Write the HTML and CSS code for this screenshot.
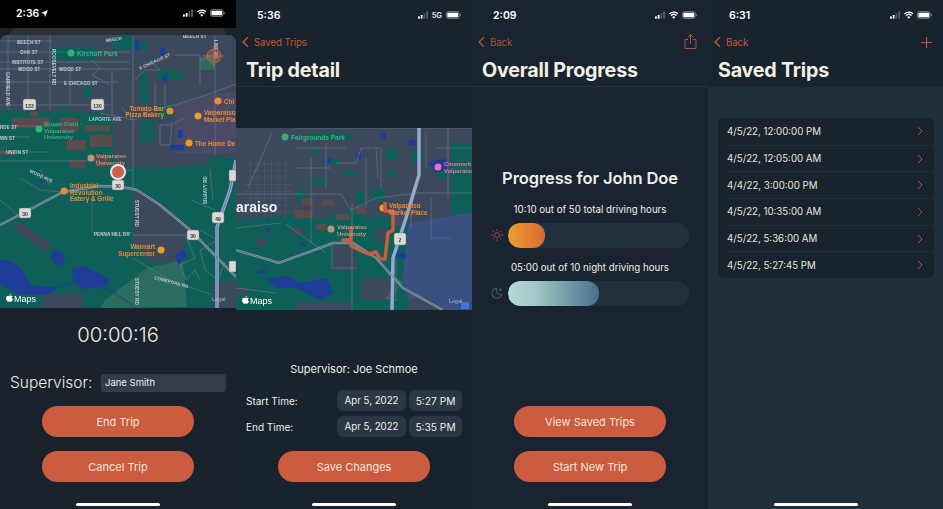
FILE: index.html
```html
<!DOCTYPE html>
<html lang="en">
<head>
<meta charset="utf-8">
<title>Driving Log</title>
<link rel="stylesheet" href="styles.css">
</head>
<body>
<svg class="defs" width="0" height="0" aria-hidden="true">
  <defs>
    <symbol id="signal" viewBox="0 0 11 8"><rect x="0" y="5.5" width="2" height="2.5" rx=".5" fill="#fff"/><rect x="3" y="4" width="2" height="4" rx=".5" fill="#fff"/><rect x="6" y="2" width="2" height="6" rx=".5" fill="#555c64"/><rect x="9" y="0" width="2" height="8" rx=".5" fill="#555c64"/></symbol>
    <symbol id="wifi" viewBox="0 0 10 8"><path d="M5 8 3.4 6.1a2.4 2.4 0 0 1 3.2 0zM2.5 5.1 1.5 4a5.2 5.2 0 0 1 7 0l-1 1.1a3.8 3.8 0 0 0-5 0zM.8 3.2 0 2.3a7.4 7.4 0 0 1 10 0l-.8.9a6.2 6.2 0 0 0-8.4 0z" fill="#fff"/></symbol>
    <symbol id="battery" viewBox="0 0 16 8"><rect x=".5" y=".5" width="13.5" height="7" rx="2" fill="none" stroke="#8a8f94"/><rect x="1.5" y="1.5" width="11.5" height="5" rx="1" fill="#fff"/><path d="M15 2.8c.6.2 1 .7 1 1.2s-.4 1-1 1.2z" fill="#8a8f94"/></symbol>
    <symbol id="back" viewBox="0 0 8 13"><path d="M6.8 1 1.2 6.5l5.6 5.5" fill="none" stroke="currentColor" stroke-width="1.6"/></symbol>
    <symbol id="apple" viewBox="0 0 10 12"><path d="M7.1 0c.1 1-.8 2.4-2.2 2.4C4.8 1.200 5.900.1 7.100 0zM5 3c.6 0 1.300-.6 2.400-.6.8 0 1.700.4 2.200 1.200-1.700 1-1.500 3.400.4 4.200-.6 1.600-1.700 3.200-2.700 3.200-.8 0-1-.5-2-.5s-1.300.5-2 .5C1.900 11 0 8.500 0 6.100 0 3.800 1.500 2.500 2.900 2.500 3.800 2.500 4.500 3 5 3z" fill="#fff"/></symbol>
    <pattern id="grid" width="7" height="7" patternUnits="userSpaceOnUse"><path d="M0 0H7M0 0V7" stroke="#5d6a80" stroke-width=".5" fill="none"/></pattern>
  </defs>
</svg>

<main class="screens">

  <section class="phone phone-map">
    <header class="status status-black">
      <span class="time">2:36<svg class="loc" viewBox="0 0 8 8"><path d="M8 0 4.600 8 3.600 4.400 0 3.400z" fill="#fff"/></svg></span>
      <span class="status-icons"><svg class="ic-signal"><use href="#signal"/></svg><svg class="ic-wifi"><use href="#wifi"/></svg><svg class="ic-battery"><use href="#battery"/></svg></span>
    </header>
    <div class="peek"></div>
    <svg class="map map-large" viewBox="0 35 236 273" role="img" aria-label="Map of Valparaiso">
      <rect class="f-green" x="0" y="35" width="236" height="273"/>
      <path class="f-slate" d="M0 35H236V160L215 155 205 165 172 168 113 167 113 122 100 113 0 110z"/>
      <path class="f-purple" d="M175 105 205 95 236 92V153H215L200 153H175z"/>
      <path class="f-green" d="M52 47h45v13H52zM113 37h20v13h-20zM157 70h25v10h-25zM140 73h8v30h-8zM83 87h9v10h-9zM158 105h16v12h-16zM122 35h12v6h-12zM132 42h16v8h-16zM140 120h14v22h-14zM60 105h6v5h-6z"/>
      <path class="f-lawn" d="M200 57h15v13h-15z"/>
      <path class="f-brown" d="M12 118h38v10H12zM60 118h18v14H60zM85 125h25v6H85zM90 135h22v12H90zM66 140h20v10H66zM95 155h15v12H95zM0 150h14v5H0zM70 160h16v8H70zM30 112h8v5h-8z"/>
      <path class="f-slate" d="M133 190 165 205 190 232 178 263 150 262 140 245 133 245zM13 228 20 222 52 245 45 252zM40 308 45 294 83 292 83 308zM213 282 236 280V308H213z"/>
      <path class="f-lawn" d="M147 268 183 260 187 307 100 308 105 300z"/>
      <path class="f-water" d="M0 260c15 0 25 10 30 25 8 2 15 1 26 2l-8 8-30 0-18-12zM72 270l12-4 18 9 8 5-5 6-22 3-10-8zM53 250l10 3 2 11-8 1-6-6zM175 256l8-7 4 6-8 10zM135 40h4v10h-4zM160 48h5v8h-5zM162 75h5v6h-5zM178 130h5v8h-5zM170 145h14v5h-14zM40 180h4v4h-4z"/>
      <path class="r-water" d="M48 290 75 283 110 290 132 305"/>
      <path class="r-thin" d="M0 41H52M0 52H130M0 62H130M0 69H130M0 82H118M0 105H110M0 126H60M0 137H30M0 152H50M0 161H100M8 35V110M28 35V105M50 35V110M70 70V105M92 60 100 68 92 75 110 85M112 70V120M133 35V190M150 60 160 70 145 70 135 80M155 82V115M175 55H200V85M200 60 215 55M165 85V110M185 118 170 125 160 125 160 145 170 145 172 125M215 35V155M215 92 236 84M100 113 135 120 150 110 175 105 215 92M133 120 122 108M20 178 40 190 62 192M92 198V233H133M133 235H190M133 258 170 280 212 295M191 200 215 210M200 230 218 240 200 250 205 270 218 280 225 262M185 235 195 258 180 265 186 280 195 270 200 280M210 170 213 200M120 170H133M0 200 18 215M40 170 50 185"/>
      <path class="r-high" d="M0 225 25 212 63 192 100 186Q122 186 137 190L160 205 190 230 236 277"/>
      <path class="r-major" d="M217 308V227L230 190 236 160"/>
      <path class="r-dark" d="M0 225 25 212 63 192 100 186Q122 186 137 190L160 205 190 230 236 277M217 308V227L230 190 236 160"/>
      <g class="t-road">
        <text x="17" y="43.500">BEECH ST</text><text x="20" y="54">OAK ST</text><text x="12" y="64">INSTITUTE ST</text><text x="18" y="71">WOOD ST</text><text x="59" y="71">WOOD ST</text><text x="64" y="84.500">E CHICAGO ST</text><text x="140" y="70" transform="rotate(-25 140 70)">E CHICAGO ST</text><text x="106" y="42" transform="rotate(-8 106 42)">BEECH</text><text x="183" y="38">BEECH ST</text><text x="89" y="121">LAPORTE AVE</text><text x="94" y="236">PENNA HILL DR</text><text x="154" y="279" transform="rotate(15 154 279)">COMEFOAD RD</text><text x="0" y="129">RDE ST</text><text x="0" y="140">WN ST</text><text x="6" y="154">UNION ST</text><text x="29" y="172" transform="rotate(25 29 172)">WOOD AVE</text>
      </g>
      <g class="t-road">
        <text x="6" y="72" transform="rotate(90 6 72)">GARFIELD AVE</text><text x="52" y="49" transform="rotate(90 52 49)">ROOSEVELT RD</text><text x="135" y="200" transform="rotate(90 135 200)">STUDSY RD</text><text x="135" y="278" transform="rotate(90 135 278)">STUDSY RD</text><text x="214" y="40" transform="rotate(90 214 40)">LINE RD</text><text x="207" y="204" transform="rotate(-90 207 204)">SILHAVY RD</text>
      </g>
      <g class="shield"><rect x="23" y="99" width="13" height="11" rx="2"/><rect x="91" y="99" width="13" height="11" rx="2"/><rect x="112" y="180" width="12" height="10" rx="2"/><rect x="19" y="208" width="12" height="10" rx="2"/><rect x="187" y="230" width="12" height="10" rx="2"/><rect x="212" y="212" width="12" height="11" rx="2"/><rect x="229" y="261" width="7" height="11" rx="1"/><rect x="229" y="170" width="7" height="11" rx="1"/></g>
      <g class="t-shield"><text x="29.500" y="108">133</text><text x="97.500" y="108">130</text><text x="118" y="188">30</text><text x="25" y="216">30</text><text x="193" y="238">30</text><text x="218" y="221">49</text></g>
      <circle class="pin-green" cx="71" cy="53" r="3.500"/><circle class="pin-green" cx="39" cy="129" r="3.500"/><circle class="pin-brown" cx="91" cy="158" r="3.500"/>
      <circle class="pin-orange" cx="170" cy="111" r="3.500"/><circle class="pin-orange" cx="218" cy="101" r="3.500"/><circle class="pin-yellow" cx="198" cy="116" r="3.500"/><circle class="pin-yellow" cx="189" cy="143" r="3.500"/><circle class="pin-orange" cx="64" cy="191" r="3.500"/><circle class="pin-yellow" cx="161" cy="250" r="3.500"/>
      <text class="t-green t-park" x="77" y="56">Kirchoff Park</text>
      <g class="t-green"><text x="44" y="126">Brown Field -</text><text x="44" y="132.500">Valparaiso</text><text x="44" y="139">University</text></g>
      <g class="t-brown"><text x="96" y="158">Valparaiso</text><text x="96" y="165">University</text></g>
      <g class="t-orange t-end"><text x="164" y="111">Tomato Bar</text><text x="164" y="117">Pizza Bakery</text><text x="155" y="249">Walmart</text><text x="155" y="256">Supercenter</text></g>
      <g class="t-orange"><text x="224" y="104">Chi</text><text x="204" y="115">Valparaiso</text><text x="204" y="122">Market Pla</text><text x="195" y="146">The Home De</text><text x="70" y="188">Industrial</text><text x="70" y="194.500">Revolution</text><text x="70" y="201">Eatery &amp; Grille</text></g>
      <circle class="user-halo" cx="118" cy="172" r="8"/><circle class="user-dot" cx="118" cy="172" r="6"/>
      <g class="target"><circle cx="214" cy="56" r="7"/><path d="M203 56h22M214 45v22"/></g>
      <use href="#apple" x="6" y="294" width="7" height="8.500"/>
      <text class="t-maps" x="14" y="302">Maps</text>
      <text class="t-legal" x="212" y="301">Legal</text>
    </svg>
    <div class="map-panel">
      <div class="timer">00:00:16</div>
      <div class="supervisor-row">
        <label class="supervisor-label" for="sup">Supervisor:</label>
        <input class="supervisor-input" id="sup" value="Jane Smith">
      </div>
    </div>
    <div class="actions">
      <button class="btn">End Trip</button>
      <button class="btn">Cancel Trip</button>
    </div>
    <div class="home"></div>
  </section>

  <section class="phone phone-detail">
    <header class="status">
      <span class="time">5:36</span>
      <span class="status-icons"><svg class="ic-signal"><use href="#signal"/></svg><span class="fiveg">5G</span><svg class="ic-battery"><use href="#battery"/></svg></span>
    </header>
    <nav class="nav"><a class="back"><svg class="ic-back"><use href="#back"/></svg>Saved Trips</a></nav>
    <h1 class="title title-ruled">Trip detail</h1>
    <svg class="map map-small" viewBox="0 0 236 182" role="img" aria-label="Map of trip route">
      <rect class="f-slate" width="236" height="182"/>
      <path class="f-green" d="M0 92 50 88 58 84 85 92 100 85 120 82 130 90 172 88 172 182H0z"/>
      <path class="f-green" d="M150 20h12v12h-12zM215 15h21v75h-21zM176 22l10-2 0 12-10 4zM70 5h45v7H70zM120 62h8v14h-8zM75 50h14v7H75zM135 60h14v12h-14zM200 40h14v10h-14zM94 30h10v6H94zM108 42h12v6h-12zM75 22h9v5h-9zM150 44h10v5h-10zM60 62h10v12H60z"/>
      <rect fill="url(#grid)" x="8" y="30" width="48" height="60"/>
      <path class="f-brown" d="M58 82h20v8H58zM66 70h12v8H66zM86 72h12v6H86zM80 96h10v6H80zM100 86h14v6h-14zM120 78h10v8h-10z"/>
      <path class="f-slate" d="M97 118 117 118 122 142 97 142z"/>
      <path class="f-slate" d="M125 150h30v22h-30zM60 174h55v8H60zM0 160h12v8H0zM140 100h12v14h-12zM20 110h10v8H20zM55 100h12v7H55z"/>
      <path class="f-lake" d="M172 96 236 84V182H210L190 168 172 172 167 150z"/>
      <path class="f-water" d="M30 151 50 148 65 155 90 150 97 165 84 172 60 160 40 160zM192 35 208 30 214 40 200 45zM145 5h5v6h-5zM90 30h5v5h-5zM120 25h5v6h-5zM160 125h10v5h-10zM172 12h7v6h-7zM30 100h4v4h-4zM65 115h5v4h-5zM22 142h8v3h-8z"/>
      <path class="f-purple" d="M155 80h12v18h-12z"/>
      <path class="r-thin" d="M0 66H105L115 82 140 70 183 65H236M36 5 12 60M75 30V115M116 75V182M130 30V80M175 70V100M195 70V110H215M100 35 120 35 125 20 145 20 145 60M0 100 45 95M50 96 90 125M96 117V140H120M150 145 167 155 150 170 162 172M190 5V40M212 0V70M160 130V170M0 160 40 165M200 20H236M58 0H236M140 20 142 50M60 20H110M60 40H95M90 15V60"/>
      <path class="r-high" d="M0 122 43 135 97 115H117L140 130 167 160 207 182"/>
      <path class="r-major" d="M183 0V47L170 90 157 130 156 182"/>
      <path class="r-dark" d="M0 122 43 135 97 115H117L140 130 167 160 207 182"/>
      <circle class="pin-brown" cx="95" cy="101" r="3.500"/><circle class="pin-yellow" cx="147" cy="80" r="3.500"/><circle class="pin-green" cx="49" cy="9" r="3.500"/><circle class="pin-pink" cx="202" cy="39" r="3.500"/>
      <path class="route" d="M149 74V83H157V102L152 105 149 131H144L140 124 133 126 128 124 115 118V112H107H115V99"/>
      <rect class="shield-small" x="158" y="105" width="12" height="12" rx="2"/>
      <text class="t-shield t-shield-dark" x="164" y="114">2</text>
      <text class="t-green t-park" x="55" y="12">Fairgrounds Park</text>
      <text class="t-city" x="0" y="84">araiso</text>
      <g class="t-brown"><text x="101" y="101">Valparaiso</text><text x="101" y="108">University</text></g>
      <g class="t-orange"><text x="153" y="80">Valparaiso</text><text x="153" y="87">Market Place</text></g>
      <g class="t-pink"><text x="208" y="38">Cinemark</text><text x="208" y="45">Valparaiso</text></g>
      <use href="#apple" x="6" y="168" width="7" height="8.500"/>
      <text class="t-maps" x="14" y="176">Maps</text>
      <text class="t-legal" x="213" y="175">Legal</text>
      <rect class="tile" x="225" y="174" width="8" height="7"/>
    </svg>
    <div class="detail-body">
      <p class="supervisor-line">Supervisor: Joe Schmoe</p>
      <div class="time-row">
        <span class="time-label">Start Time:</span>
        <span class="pill pill-date">Apr 5, 2022</span><span class="pill pill-time">5:27 PM</span>
      </div>
      <div class="time-row">
        <span class="time-label">End Time:</span>
        <span class="pill pill-date">Apr 5, 2022</span><span class="pill pill-time">5:35 PM</span>
      </div>
    </div>
    <div class="actions">
      <button class="btn">Save Changes</button>
    </div>
    <div class="home"></div>
  </section>

  <section class="phone phone-progress">
    <header class="status">
      <span class="time">2:09</span>
      <span class="status-icons"><svg class="ic-signal"><use href="#signal"/></svg><svg class="ic-wifi"><use href="#wifi"/></svg><svg class="ic-battery"><use href="#battery"/></svg></span>
    </header>
    <nav class="nav nav-muted"><a class="back"><svg class="ic-back"><use href="#back"/></svg>Back</a>
      <svg class="ic-share" viewBox="0 0 13 15"><path d="M4 5.500H1v9h11v-9H9M6.500 10V.8M3.800 3.200 6.500.6l2.700 2.600" fill="none" stroke="currentColor"/></svg>
    </nav>
    <h1 class="title title-ruled">Overall Progress</h1>
    <div class="progress">
      <h2 class="progress-title">Progress for John Doe</h2>
      <p class="progress-text">10:10 out of 50 total driving hours</p>
      <div class="meter">
        <svg class="ic-sun" viewBox="0 0 12 12"><circle cx="6" cy="6" r="2.400"/><path d="M6 0v2M6 10v2M0 6h2M10 6h2M1.800 1.800l1.400 1.400M8.800 8.800l1.400 1.400M1.800 10.200l1.400-1.400M8.800 3.200l1.400-1.400"/></svg>
        <div class="track"><div class="fill fill-day"></div></div>
      </div>
      <p class="progress-text progress-text-night">05:00 out of 10 night driving hours</p>
      <div class="meter">
        <svg class="ic-moon" viewBox="0 0 11 11"><path d="M5.200 1.200A4.500 4.500 0 1 0 9.800 7 4.200 4.200 0 0 1 5.200 1.200z"/><path d="M8.500 1v3M7 2.500h3"/></svg>
        <div class="track"><div class="fill fill-night"></div></div>
      </div>
    </div>
    <div class="actions">
      <button class="btn">View Saved Trips</button>
      <button class="btn">Start New Trip</button>
    </div>
    <div class="home"></div>
  </section>

  <section class="phone phone-list">
    <header class="status">
      <span class="time">6:31</span>
      <span class="status-icons"><svg class="ic-signal"><use href="#signal"/></svg><svg class="ic-wifi"><use href="#wifi"/></svg><svg class="ic-battery"><use href="#battery"/></svg></span>
    </header>
    <nav class="nav"><a class="back"><svg class="ic-back"><use href="#back"/></svg>Back</a>
      <svg class="ic-plus" viewBox="0 0 11 11"><path d="M5.500 0v11M0 5.500h11" fill="none" stroke="currentColor" stroke-width="1.100"/></svg>
    </nav>
    <h1 class="title">Saved Trips</h1>
    <div class="list-area">
      <ul class="trips">
        <li class="trip">4/5/22, 12:00:00 PM<svg class="ic-chev" viewBox="0 0 6 10"><path d="M1 1l4 4-4 4" fill="none" stroke="currentColor"/></svg></li>
        <li class="trip">4/5/22, 12:05:00 AM<svg class="ic-chev" viewBox="0 0 6 10"><path d="M1 1l4 4-4 4" fill="none" stroke="currentColor"/></svg></li>
        <li class="trip">4/4/22, 3:00:00 PM<svg class="ic-chev" viewBox="0 0 6 10"><path d="M1 1l4 4-4 4" fill="none" stroke="currentColor"/></svg></li>
        <li class="trip">4/5/22, 10:35:00 AM<svg class="ic-chev" viewBox="0 0 6 10"><path d="M1 1l4 4-4 4" fill="none" stroke="currentColor"/></svg></li>
        <li class="trip">4/5/22, 5:36:00 AM<svg class="ic-chev" viewBox="0 0 6 10"><path d="M1 1l4 4-4 4" fill="none" stroke="currentColor"/></svg></li>
        <li class="trip">4/5/22, 5:27:45 PM<svg class="ic-chev" viewBox="0 0 6 10"><path d="M1 1l4 4-4 4" fill="none" stroke="currentColor"/></svg></li>
      </ul>
      <div class="home"></div>
    </div>
  </section>

</main>
</body>
</html>
```

FILE: styles.css
```css
* { box-sizing: border-box; }
html, body { margin: 0; height: 509px; overflow: hidden; background: #18232d; }
body { font-family: Inter, "Liberation Sans", sans-serif; color: #f0efe6; }
.defs { position: absolute; }
p, h1, h2, ul { margin: 0; padding: 0; }

.screens { display: flex; width: 943px; height: 509px; }
.phone { display: flex; flex-direction: column; width: 236px; height: 509px; flex: none; overflow: hidden; background: #18232d; }
.phone-map { background: #1a222c; }
.phone-progress { background: #1a2430; }
.phone-list { width: 235px; }

.status { display: flex; align-items: center; justify-content: space-between; height: 30px; padding: 0 11px 0 21px; font-size: 10.5px; font-weight: 600; color: #fff; flex: none; }
.status-black { background: #000; height: 28px; padding: 0 11px 2px 16px; }
.status .time { display: flex; align-items: center; gap: 2px; }
.loc { width: 7px; height: 7px; }
.status-icons { display: flex; align-items: center; gap: 4px; }
.ic-signal { width: 10px; height: 8px; }
.ic-wifi { width: 9.500px; height: 8px; }
.ic-battery { width: 15px; height: 8px; }
.fiveg { font-size: 7.5px; color: #e6e6e6; }

.peek { height: 7px; margin: 0 10px; background: #2c3138; border-radius: 6px 6px 0 0; flex: none; box-shadow: 0 -7px 0 #000; }
.map { display: block; flex: none; width: 236px; filter: blur(.35px); }
.map-large { height: 273px; border-radius: 7px 7px 0 0; background: #000; }
.map-small { height: 182px; margin-top: 41px; }

.nav { display: flex; align-items: center; justify-content: space-between; height: 24px; padding: 0 11px 0 6px; color: #c4553a; font-size: 9.700px; letter-spacing: -0.1px; flex: none; }
.nav-muted { color: #a8533f; }
.back { display: flex; align-items: center; gap: 5px; }
.ic-back { width: 7px; height: 12px; }
.ic-share { width: 13px; height: 15px; margin-bottom: 2px; }
.ic-plus { width: 11px; height: 11px; }

.title { height: 33px; padding: 4px 10px 0; font-size: 19.700px; font-weight: 700; line-height: 24px; color: #f3f0e4; flex: none; letter-spacing: -0.2px; }
.title-ruled { border-bottom: 1px solid #263340; }

.map-panel { display: flex; flex-direction: column; }
.timer { margin-top: 14px; text-align: center; font-size: 20.300px; font-weight: 300; line-height: 26px; }
.supervisor-row { display: flex; align-items: center; gap: 9px; margin-top: 25px; padding-left: 10px; }
.supervisor-label { width: 82px; font-size: 15.500px; font-weight: 300; white-space: nowrap; }
.supervisor-input { width: 125px; height: 18px; padding: 0 4px; border: 0; border-radius: 3px; background: #333c4a; color: #eee; font: 400 9.500px Inter, "Liberation Sans", sans-serif; }

.detail-body { display: flex; flex-direction: column; }
.supervisor-line { margin-top: 51px; text-align: center; font-size: 11px; line-height: 16px; font-weight: 400; }
.time-row { display: flex; align-items: center; height: 21px; margin-top: 5px; padding: 0 10px; font-size: 10px; }
.supervisor-line + .time-row { margin-top: 13px; }
.time-label { width: 91px; }
.pill { display: flex; align-items: center; justify-content: center; height: 21px; border-radius: 6px; background: #2c3745; }
.pill-date { width: 69px; margin-right: 3px; font-size: 9.700px; }
.pill-time { width: 53px; font-size: 10.200px; }

.progress { display: flex; flex-direction: column; padding: 81px 19px 0 19px; }
.progress-title { text-align: center; font-size: 16.500px; line-height: 20px; font-weight: 600; letter-spacing: -0.1px; }
.progress-text { margin-top: 15px; text-align: center; font-size: 9.700px; line-height: 14px; font-weight: 400; }
.progress-text-night { margin-top: 13.500px; }
.meter { display: flex; align-items: center; gap: 4.500px; margin-top: 6px; }
.track { flex: 1; height: 24.500px; border-radius: 12px; background: #21303f; overflow: hidden; }
.fill { height: 100%; border-radius: 12px; }
.fill-day { width: 37.500px; background: linear-gradient(90deg, #eda02c, #d9683a); }
.fill-night { width: 91px; background: linear-gradient(90deg, #b4d9d6, #a3c8c8 30%, #46708c); }
.ic-sun { width: 12px; height: 12px; stroke: #b5553d; fill: none; stroke-width: .8; }
.ic-moon { width: 12px; height: 12px; stroke: #3a5a75; fill: none; stroke-width: 1; }

.actions { display: flex; flex-direction: column; align-items: center; gap: 14px; margin-top: auto; flex: none; }
.btn { width: 152px; height: 31px; border: 0; border-radius: 16px; background: #cb5c40; color: #f3e6da; font: 400 11px Inter, "Liberation Sans", sans-serif; }
.home { width: 84px; height: 3px; margin: 21px auto 3px; border-radius: 2px; background: #fff; flex: none; }

.list-area { display: flex; flex-direction: column; flex: 1; padding: 31px 9px 0 10px; background: #1f2e3c; }
.trips { list-style: none; background: #18232d; border-radius: 6px; overflow: hidden; }
.trip { display: flex; align-items: center; justify-content: space-between; height: 26.700px; margin-left: 9px; padding-right: 11px; font-size: 9.700px; color: #e8e6dc; border-top: 1px solid #212e3a; }
.trip:first-child { border-top: 0; }
.ic-chev { width: 6px; height: 10px; color: #b8503a; }
.list-area .home { margin-top: auto; margin-left: 56px; margin-right: 0; }

/* Map paint */
.f-green { fill: #0e5f57; }
.f-slate { fill: #3c485c; }
.f-purple { fill: #4a4a66; }
.f-lawn { fill: #2a6d5f; }
.f-brown { fill: #5a4a4c; }
.f-water { fill: #1f3d98; }
.f-lake { fill: #3a5080; }
.r-water { fill: none; stroke: #1f3d98; stroke-width: 1; }
.r-thin { fill: none; stroke: #66748a; stroke-width: .7; }
.r-high { fill: none; stroke: #8395ae; stroke-width: 2.400; }
.r-major { fill: none; stroke: #94a8d0; stroke-width: 3.500; }
.r-dark { fill: none; stroke: #3c485c; stroke-width: .5; }
.route { fill: none; stroke: #cc5c3e; stroke-width: 3.500; stroke-linejoin: round; }
.map text { font-family: "Liberation Sans", Inter, sans-serif; }
.t-road text { font-size: 4.500px; fill: #c2cad6; font-weight: 700; letter-spacing: .1px; }
.t-green { font-size: 6px; fill: #3bb07a; font-weight: 700; }
.t-park { font-size: 6.500px; }
.t-brown { font-size: 6px; fill: #c69a7e; font-weight: 700; }
.t-orange { font-size: 6.300px; fill: #f0892e; font-weight: 700; }
.t-end { text-anchor: end; }
.t-pink { font-size: 6px; fill: #ef6fb0; font-weight: 700; }
.shield rect { fill: #d9d9d6; stroke: #777; stroke-width: .5; }
.shield-small { fill: #d9d9d6; stroke: #777; stroke-width: .5; }
.t-shield { font-size: 5px; fill: #333; font-weight: 700; text-anchor: middle; }
.t-shield text { text-anchor: middle; }
.pin-green { fill: #35b07a; }
.pin-brown { fill: #c09378; }
.pin-orange { fill: #f0892e; }
.pin-yellow { fill: #eb9d22; }
.pin-pink { fill: #ef6fb0; }
.user-halo { fill: #e6e6e6; }
.user-dot { fill: #d0604a; }
.target { fill: rgba(190,120,90,.35); stroke: #cf5a3a; stroke-width: 1; }
.t-maps { font-size: 9px; fill: #fff; font-weight: 400; }
.t-legal { font-size: 5.500px; fill: #aab4c2; }
.t-city { font-size: 14px; font-weight: 600; fill: #eef0f4; }
.tile { fill: #3a78e0; }
```
